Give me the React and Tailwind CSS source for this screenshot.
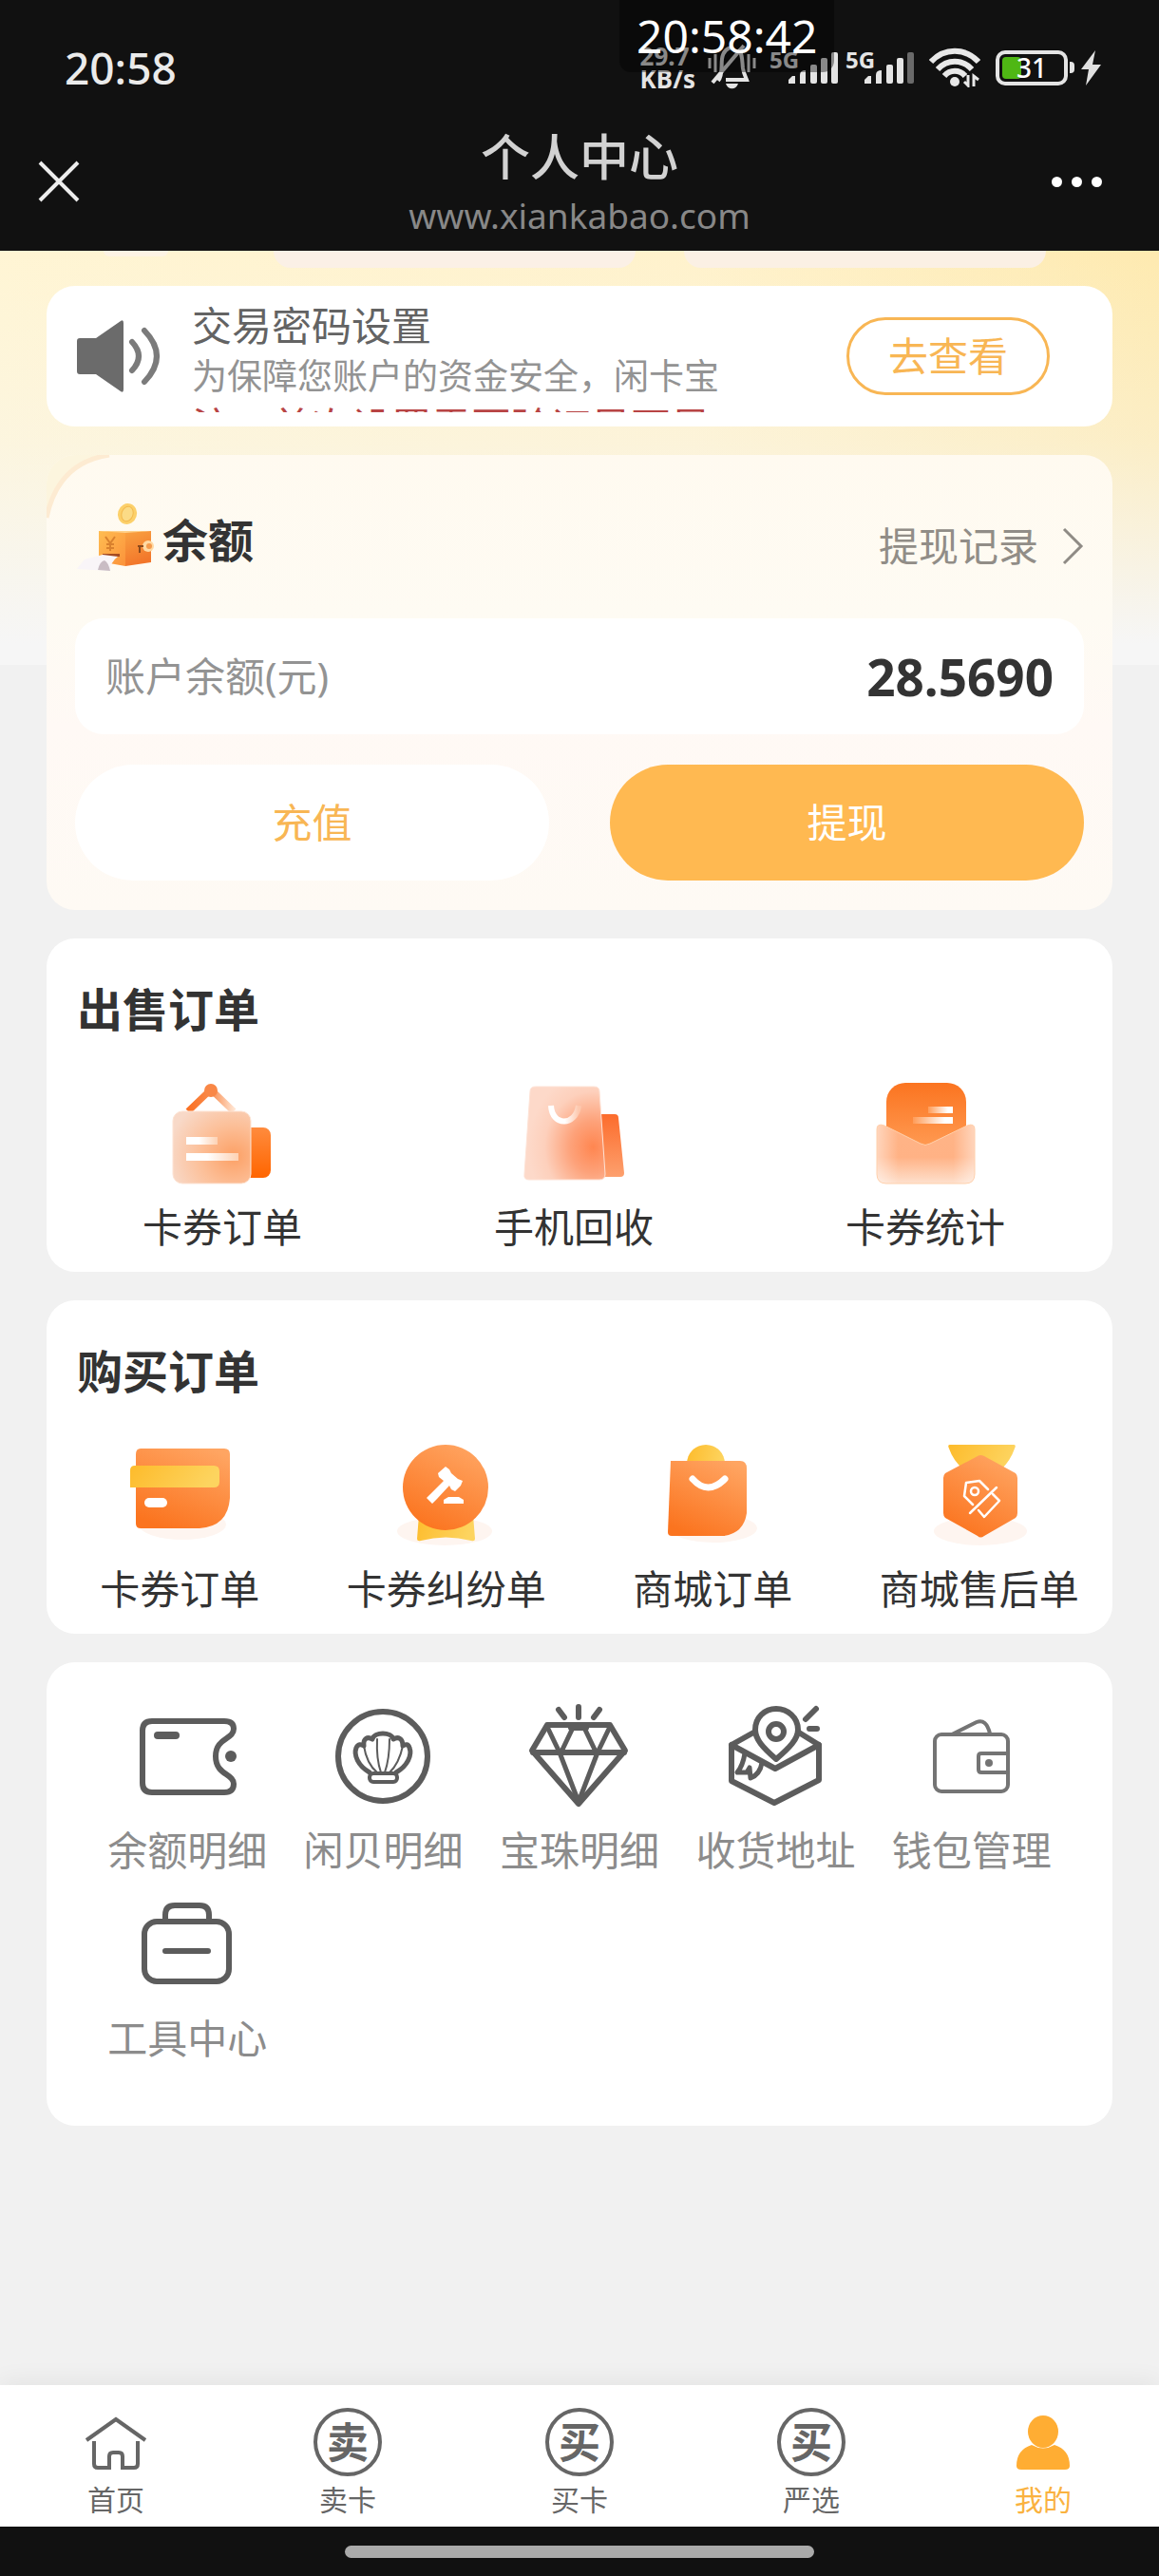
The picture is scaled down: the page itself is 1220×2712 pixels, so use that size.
import React from "react";

function CloseIcon() {
  return (
    <svg className="h-11 w-11" viewBox="0 0 44 44" fill="none" stroke="#ededed" strokeWidth="4">
      <path d="M2 2 42 42M42 2 2 42" />
    </svg>
  );
}

function BellOffIcon() {
  return (
    <svg className="h-[52px] w-[54px]" viewBox="0 0 54 52" fill="none" stroke="#e4e4e4">
      <path d="M12 40C17 34 15 25 16 17 17 9 22 5 27 5M33 7C38 11 37 20 38 27 39 33 41 36 42 39H20" strokeWidth="4" />
      <path d="M6 42 39 3" strokeWidth="4" />
      <path d="M20 43H33C31 50 22 50 20 43Z" fill="#e4e4e4" stroke="none" />
      <path d="M3 16V27M9 12V31M44 12V31M50 16V27" strokeWidth="3" />
    </svg>
  );
}

function SignalIcon({ weak }) {
  return (
    <span className="flex w-[76px] items-end">
      <span className="self-start text-[24px] leading-[24px] font-bold text-[#e4e4e4]">5G</span>
      <svg className="-ml-3 h-[40px] w-[54px] shrink-0" viewBox="0 0 54 40" fill="#e4e4e4">
        <path d="M1 37V33L5 29H8V37ZM13 37V28Q13 23 19 23V37Z" />
        <rect x="24" y="17" width="7" height="20" rx="2" />
        <rect x="35" y="10" width="7" height="27" rx="2" />
        <rect x="46" y="4" width="7" height="33" rx="2" fill={weak ? "#6a6a6a" : "#e4e4e4"} />
      </svg>
    </span>
  );
}

function WifiIcon() {
  return (
    <svg className="h-[42px] w-[54px]" viewBox="0 0 54 42" fill="none" stroke="#e8e8e8" strokeWidth="6">
      <path d="M2 15C16 0 38 0 52 15" />
      <path d="M9 23C19 12 35 12 45 23" />
      <path d="M16 30C22 23 32 23 38 30" />
      <circle cx="27" cy="36" r="5" fill="#e8e8e8" stroke="none" />
      <path d="M41 29V40L37 36M47 41V30L52 34" strokeWidth="3" />
    </svg>
  );
}

function BoltIcon() {
  return (
    <svg className="h-[37px] w-[23px]" viewBox="0 0 23 37" fill="#e0e0e0">
      <path d="M16 0 1 20H9L6 37 22 15H13Z" />
    </svg>
  );
}

function SpeakerIcon() {
  return (
    <svg className="h-[76px] w-[88px] shrink-0" viewBox="0 0 88 76">
      <path d="M3 19H20L46 1Q49-1 49 3V73Q49 77 46 75L20 57H3Q0 57 0 54V22Q0 19 3 19Z" fill="#6b6b6b" />
      <path d="M58 23Q72 38 58 53" fill="none" stroke="#7b7b7b" strokeWidth="6" strokeLinecap="round" />
      <path d="M71 11Q97 38 71 65" fill="none" stroke="#7b7b7b" strokeWidth="6" strokeLinecap="round" />
    </svg>
  );
}

function SafeIcon() {
  return (
    <svg className="h-[88px] w-[92px] shrink-0" viewBox="0 0 92 88">
      <defs>
        <linearGradient id="safeFront" x1="0" y1="0" x2="1" y2="1">
          <stop stopColor="#ffbd52" />
          <stop offset="1" stopColor="#fb923a" />
        </linearGradient>
        <linearGradient id="safeSide" x1="0" y1="0" x2="0.3" y2="1">
          <stop stopColor="#f9a242" />
          <stop offset="1" stopColor="#f2762a" />
        </linearGradient>
      </defs>
      <ellipse cx="55" cy="16" rx="10" ry="11" fill="#fcd06a" transform="rotate(18 55 16)" />
      <ellipse cx="55" cy="16" rx="6" ry="8" fill="#fbdb86" stroke="#f2b84c" transform="rotate(18 55 16)" />
      <path d="M25 34H80L53 37Z" fill="#ffd18a" />
      <path d="M25 34 53 36V71L25 66Z" fill="url(#safeFront)" />
      <path d="M53 36 80 34V67L53 71Z" fill="url(#safeSide)" />
      <path d="M32 40 37 47 42 40M37 47V55M33 48H41M33 52H41" fill="none" stroke="#d9812e" strokeWidth="2" />
      <circle cx="77" cy="50" r="6" fill="#ffd9a3" />
      <circle cx="78" cy="50" r="3" fill="#f59a4c" />
      <path d="M66 50H72M68 50V57" stroke="#8c4a1c" strokeWidth="2" fill="none" />
      <path d="M29 58H47V61H29Z" fill="#a64c22" />
      <path d="M10 64 29 59 45 61Q37 67 37 76L2 74Z" fill="#f9f5f8" />
      <path d="M24 75Q26 66 31 65 35 67 37 76Z" fill="#c9bcc4" />
    </svg>
  );
}

function ChevronIcon() {
  return (
    <svg className="h-10 w-6" viewBox="0 0 24 40" fill="none" stroke="#8f8b85" strokeWidth="3">
      <path d="M3 2 21 20 3 38" />
    </svg>
  );
}

const artClass = "h-[110px] w-[110px]";
const view = "0 0 110 110";

function HangingSignIcon() {
  return (
    <svg className={artClass} viewBox={view}>
      <defs>
        <linearGradient id="signBack" x1="0" y1="0" x2="0" y2="1">
          <stop stopColor="#ff8b3d" />
          <stop offset="1" stopColor="#ff6500" />
        </linearGradient>
        <radialGradient id="signFace" cx="0.78" cy="0.62" r="0.85">
          <stop stopColor="#fca065" />
          <stop offset="0.5" stopColor="#fcbf98" />
          <stop offset="1" stopColor="#f8d9c8" />
        </radialGradient>
        <linearGradient id="signRope" x1="0" y1="0" x2="1" y2="0">
          <stop stopColor="#fa7124" />
          <stop offset="0.5" stopColor="#f98b4c" />
          <stop offset="1" stopColor="#ffe3d0" />
        </linearGradient>
        <linearGradient id="signLine" x1="0" y1="0" x2="1" y2="0">
          <stop offset="0.4" stopColor="#fff" />
          <stop offset="1" stopColor="#fdd2b4" />
        </linearGradient>
      </defs>
      <path d="M19 32 43 9 67 32" fill="none" stroke="url(#signRope)" strokeWidth="7" />
      <circle cx="43" cy="10" r="7" fill="#f98746" />
      <rect x="74" y="49" width="32" height="53" rx="8" fill="url(#signBack)" />
      <rect x="3" y="32" width="82" height="76" rx="10" fill="url(#signFace)" stroke="#fde3d3" strokeWidth="1" />
      <rect x="17" y="59" width="33" height="8" fill="url(#signLine)" />
      <rect x="17" y="76" width="55" height="8" fill="url(#signLine)" />
    </svg>
  );
}

function PhoneBagIcon() {
  return (
    <svg className={artClass} viewBox={view}>
      <defs>
        <radialGradient id="bagFace" cx="0.85" cy="0.65" r="0.8">
          <stop stopColor="#ff8650" />
          <stop offset="0.35" stopColor="#fda27a" />
          <stop offset="0.75" stopColor="#fdd0bc" />
          <stop offset="1" stopColor="#fdd9c9" />
        </radialGradient>
        <linearGradient id="bagBack" x1="0" y1="0" x2="0" y2="1">
          <stop stopColor="#fc6c2c" />
          <stop offset="1" stopColor="#fda06e" />
        </linearGradient>
        <linearGradient id="bagSmile" x1="0" y1="0" x2="1" y2="0">
          <stop offset="0.5" stopColor="#fff" />
          <stop offset="1" stopColor="#fdc8ae" />
        </linearGradient>
      </defs>
      <path d="M82 35H98Q102 35 102 39L108 97Q108 101 104 101H82Z" fill="url(#bagBack)" />
      <path d="M15 6H76Q82 6 82 11L88 98Q88 104 82 104H8Q2 104 3 98L9 11Q9 6 15 6Z" fill="url(#bagFace)" stroke="#fee2d5" strokeWidth="1" />
      <path d="M31 26C32 48 57 48 60 26" fill="none" stroke="url(#bagSmile)" strokeWidth="6" />
    </svg>
  );
}

function EnvelopeIcon() {
  return (
    <svg className={artClass} viewBox={view}>
      <defs>
        <linearGradient id="envCard" x1="0" y1="0" x2="0" y2="1">
          <stop stopColor="#fb7420" />
          <stop offset="0.75" stopColor="#ff9a52" />
        </linearGradient>
        <linearGradient id="envBody" x1="0" y1="0" x2="0" y2="1">
          <stop stopColor="#ffb487" />
          <stop offset="0.55" stopColor="#ffb285" />
          <stop offset="1" stopColor="#fee0cd" />
        </linearGradient>
        <linearGradient id="envEdge" x1="0" y1="0" x2="1" y2="0">
          <stop stopColor="#fff" stopOpacity="0.45" />
          <stop offset="0.22" stopColor="#fff" stopOpacity="0" />
          <stop offset="0.78" stopColor="#fff" stopOpacity="0" />
          <stop offset="1" stopColor="#fff" stopOpacity="0.45" />
        </linearGradient>
        <linearGradient id="envLine" x1="0" y1="0" x2="1" y2="0">
          <stop stopColor="#ff9c58" />
          <stop offset="0.8" stopColor="#fff" />
        </linearGradient>
      </defs>
      <rect x="14" y="2" width="84" height="90" rx="20" fill="url(#envCard)" />
      <rect x="58" y="27" width="26" height="7" fill="url(#envLine)" />
      <rect x="42" y="38" width="42" height="7" fill="url(#envLine)" />
      <path d="M4 51Q4 44 12 47L50 66Q55 69 60 66L99 47Q107 44 107 51V98Q107 108 97 108H14Q4 108 4 98Z" fill="url(#envBody)" />
      <path d="M4 51Q4 44 12 47L50 66Q55 69 60 66L99 47Q107 44 107 51V98Q107 108 97 108H14Q4 108 4 98Z" fill="url(#envEdge)" stroke="#ffd0ac" strokeWidth="1" />
    </svg>
  );
}

function OrangeDefs({ id }) {
  return (
    <defs>
      <linearGradient id={id} x1="0.8" y1="0" x2="0.3" y2="1">
        <stop stopColor="#ffa562" />
        <stop offset="1" stopColor="#fb741f" />
      </linearGradient>
      <linearGradient id={id + "Gold"} x1="0" y1="0" x2="1" y2="0.2">
        <stop stopColor="#fdbb2b" />
        <stop offset="1" stopColor="#fdd45f" />
      </linearGradient>
    </defs>
  );
}

function CardIcon() {
  return (
    <svg className={artClass} viewBox={view}>
      <OrangeDefs id="card" />
      <ellipse cx="58" cy="86" rx="46" ry="16" fill="#fef5f0" />
      <path d="M14 6H102Q108 6 108 12V58Q106 88 76 90H14Q9 90 9 85V12Q9 6 14 6Z" fill="url(#card)" />
      <path d="M8 24H91Q97 24 97 30V41Q97 47 91 47H3V29Q3 24 8 24Z" fill="url(#cardGold)" />
      <rect x="18" y="58" width="24" height="10" rx="5" fill="#fff" />
    </svg>
  );
}

function GavelIcon() {
  return (
    <svg className={artClass} viewBox={view}>
      <OrangeDefs id="gavel" />
      <ellipse cx="53" cy="93" rx="50" ry="15" fill="#fef5f0" />
      <path d="M26 76H83L85 101Q85 104 81 103 54 96 28 103 24 104 24 101Z" fill="url(#gavelGold)" />
      <circle cx="54" cy="47" r="45" fill="url(#gavel)" />
      <path d="M54 25 58 28 60 32 67 38 72 40 70 45 64 51 60 49 58 45 45 59 40 64 34 58 38 54 52 40 47 36 46 32Z" fill="#fff" />
      <path d="M52 64V60L57 57H68L73 60V64Z" fill="#fff" />
    </svg>
  );
}

function SmileBagIcon() {
  return (
    <svg className={artClass} viewBox={view}>
      <OrangeDefs id="smile" />
      <ellipse cx="56" cy="90" rx="46" ry="15" fill="#fef5f0" />
      <circle cx="48" cy="22" r="20" fill="url(#smileGold)" />
      <path d="M11 19H84Q91 19 91 27V74Q88 95 67 98H12Q8 98 8 94Z" fill="url(#smile)" />
      <path d="M34 38Q50 56 68 38" fill="none" stroke="#fff" strokeWidth="7" strokeLinecap="round" />
    </svg>
  );
}

function MedalIcon() {
  return (
    <svg className={artClass} viewBox={view}>
      <OrangeDefs id="medal" />
      <ellipse cx="56" cy="93" rx="49" ry="15" fill="#fef5f0" />
      <path d="M24 2H91Q94 2 92 6Q88 18 78 28H38Q27 18 23 6 21 2 24 2Z" fill="url(#medalGold)" />
      <path d="M53 14Q56 12 60 14L93 32Q95 34 95 37V74Q95 77 93 79L60 98Q56 101 53 98L19 79Q17 77 17 74V37Q17 34 19 32Z" fill="url(#medal)" />
      <g fill="none" stroke="#fff" strokeWidth="2.5" strokeLinecap="round" strokeLinejoin="round">
        <path d="M64 49 55 40 41 42 39 56 48 65" />
        <circle cx="50" cy="51" r="4" />
        <path d="M73 47 45 74M69 54 76 61 60 78 54 71" />
      </g>
    </svg>
  );
}

function LineArt({ children, width = 6, color = "#5c5c5c" }) {
  return (
    <svg className={artClass} viewBox={view} fill="none" stroke={color} strokeWidth={width} strokeLinejoin="round" strokeLinecap="round">
      {children}
    </svg>
  );
}

function TicketIcon() {
  return (
    <LineArt>
      <path d="M18 18H94Q104 18 104 26C104 38 85 35 85 55S104 73 104 84Q104 93 94 93H18Q8 93 8 83V28Q8 18 18 18Z" />
      <path d="M24 33H43" strokeWidth="8" />
      <circle cx="101" cy="55" r="6" fill="#5c5c5c" stroke="none" />
    </LineArt>
  );
}

function ShellIcon() {
  return (
    <LineArt>
      <circle cx="54" cy="55" r="47" />
      <path d="M40 72C28 65 23 54 26 46 28 42 31 42 34 44 33 36 38 34 43 37 45 29 63 29 65 37 70 34 75 36 75 44 78 42 81 42 82 46 85 54 80 65 68 72" strokeWidth="5" />
      <path d="M34 44Q37 63 48 72M65 37M75 44Q71 63 61 72M48 37Q47 58 52 72M61 37Q61 58 56 72" strokeWidth="2" />
      <rect x="40" y="73" width="29" height="9" rx="4" strokeWidth="4" />
    </LineArt>
  );
}

function DiamondIcon() {
  return (
    <LineArt>
      <path d="M21 22H87L103 49 54 105 5 49Z" />
      <path d="M6 51H102" />
      <path d="M21 24 34 51 54 103 74 51 87 24M48 25 36 50M60 25 72 50" strokeWidth="5" />
      <path d="M46 25H62" strokeWidth="6" />
      <path d="M33 6 39 14M54 3V14M76 6 70 14" />
    </LineArt>
  );
}

function ParcelIcon() {
  return (
    <LineArt>
      <path d="M34 29 9 43V81L54 104 101 80V43L80 30" />
      <path d="M9 43 55 68 101 43" />
      <path d="M56 58C42 46 34 37 34 27 34 14 44 5 56 5S79 14 79 27C79 37 70 46 56 58Z" />
      <circle cx="56" cy="29" r="8" />
      <path d="M23 52Q21 65 15 72L25 72 28 67 29 78Q39 74 41 62" strokeWidth="5" />
      <path d="M98 5 87 16M91 26H99" />
    </LineArt>
  );
}

function WalletIcon() {
  return (
    <LineArt width={4} color="#747474">
      <rect x="16" y="32" width="77" height="60" rx="7" />
      <path d="M34 32 60 19Q70 15 74 31" />
      <path d="M93 52H65Q62 52 62 55V69Q62 72 65 72H93" />
      <circle cx="73" cy="62" r="4" fill="#747474" stroke="none" />
    </LineArt>
  );
}

function ToolboxIcon() {
  return (
    <LineArt>
      <rect x="10" y="31" width="89" height="63" rx="13" />
      <path d="M32 31V24Q32 14 42 14H68Q78 14 78 24V31M32 62H77" />
    </LineArt>
  );
}

function HomeIcon() {
  return (
    <svg className="h-[72px] w-[72px]" viewBox="0 0 72 72" fill="none" stroke="#666" strokeWidth="4">
      <path d="M5 34 36 12 67 34" />
      <path d="M13 35V59Q13 63 17 63H29V51Q29 47 33 47H39Q43 47 43 51V63H55Q59 63 59 59V35" />
    </svg>
  );
}

function PersonIcon() {
  return (
    <svg className="h-[72px] w-[72px]" viewBox="0 0 72 72" fill="#ffad33">
      <ellipse cx="36" cy="25" rx="16" ry="17" />
      <path d="M24 39Q36 46 48 39 64 44 64 61 64 65 59 65H13Q8 65 8 61 8 44 24 39Z" />
    </svg>
  );
}

function CircledGlyph({ children }) {
  return (
    <span aria-hidden="true" className="flex h-[72px] w-[72px] items-center justify-center rounded-full border-4 border-[#666] text-[44px] leading-none font-bold">
      {children}
    </span>
  );
}

function Entry({ icon, label, muted }) {
  return (
    <a href="#" className={`flex flex-col items-center gap-3.5 text-[42px] leading-[60px] whitespace-nowrap ${muted ? "text-[#8c8c8c]" : "text-[#333]"}`}>
      {icon}
      <span>{label}</span>
    </a>
  );
}

function OrderCard({ title, gridClass, items }) {
  return (
    <section className="rounded-[30px] bg-white pt-[43px] pb-[17px]">
      <h2 className="px-8 text-[48px] leading-[64px] font-bold text-[#333]">{title}</h2>
      <div className={`mt-[43px] grid ${gridClass}`}>
        {items.map(([label, icon]) => (
          <Entry key={label} label={label} icon={icon} />
        ))}
      </div>
    </section>
  );
}

const sellItems = [
  ["卡券订单", <HangingSignIcon />],
  ["手机回收", <PhoneBagIcon />],
  ["卡券统计", <EnvelopeIcon />],
];

const buyItems = [
  ["卡券订单", <CardIcon />],
  ["卡券纠纷单", <GavelIcon />],
  ["商城订单", <SmileBagIcon />],
  ["商城售后单", <MedalIcon />],
];

const toolItems = [
  ["余额明细", <TicketIcon />],
  ["闲贝明细", <ShellIcon />],
  ["宝珠明细", <DiamondIcon />],
  ["收货地址", <ParcelIcon />],
  ["钱包管理", <WalletIcon />],
  ["工具中心", <ToolboxIcon />],
];

const tabs = [
  ["首页", <HomeIcon />],
  ["卖卡", <CircledGlyph>卖</CircledGlyph>],
  ["买卡", <CircledGlyph>买</CircledGlyph>],
  ["严选", <CircledGlyph>买</CircledGlyph>],
  ["我的", <PersonIcon />, true],
];

function StatusBar() {
  return (
    <div className="relative flex h-[118px] items-center justify-between pt-6 pr-[60px] pl-[68px]">
      <span className="text-[46px] leading-none font-medium text-[#ebebeb]">20:58</span>
      <div className="flex items-center gap-3">
        <span className="text-[26px] leading-[24px] font-bold text-[#e4e4e4]">
          29.7
          <br />
          KB/s
        </span>
        <BellOffIcon />
        <span className="flex gap-1">
          <SignalIcon />
          <SignalIcon weak />
        </span>
        <WifiIcon />
        <span className="ml-1 flex items-center gap-0.5">
          <span className="relative flex h-[37px] w-[76px] items-center justify-center rounded-[10px] border-4 border-[#e4e4e4] text-[28px] leading-none font-medium text-white">
            <span className="absolute top-[3px] left-[3px] h-[23px] w-5 rounded-[4px] bg-[#4fb714]" />
            <span className="relative">31</span>
          </span>
          <span className="mr-1 h-3 w-[5px] rounded-r bg-[#e4e4e4]" />
          <BoltIcon />
        </span>
      </div>
      <span className="absolute top-0 left-[652px] rounded-b-xl bg-black/40 px-[18px] text-[48px] leading-[76px] text-white">
        20:58:42
      </span>
    </div>
  );
}

export default function App() {
  return (
    <div className="flex min-h-screen flex-col bg-[#f1f1f1] font-['Noto_Sans','Noto_Sans_CJK_SC',sans-serif]">
      <header className="bg-[#111]">
        <StatusBar />
        <div className="grid h-[146px] grid-cols-[80px_1fr_60px] items-center pr-[60px] pl-10">
          <button type="button" aria-label="关闭">
            <CloseIcon />
          </button>
          <div className="pt-2 text-center">
            <h1 className="text-[52px] leading-[64px] font-medium text-[#d2d2d2]">个人中心</h1>
            <p className="text-[37px] leading-[60px] text-[#888]">www.xiankabao.com</p>
          </div>
          <button type="button" aria-label="更多" className="flex items-center justify-end gap-2.5">
            <span className="h-[11px] w-[11px] rounded-full bg-white" />
            <span className="h-[11px] w-[11px] rounded-full bg-white" />
            <span className="h-[11px] w-[11px] rounded-full bg-white" />
          </button>
        </div>
      </header>

      <main className="flex-1 bg-[linear-gradient(180deg,rgba(246,246,246,0)_0%,rgba(246,246,246,0.3)_45%,#f6f6f6_95%),linear-gradient(90deg,#fff5d4_0%,#fff2cc_60%,#feeab0_100%)] bg-[length:100%_436px] bg-no-repeat px-[49px]">
        <div className="flex h-[37px] items-start overflow-hidden">
          <span className="ml-[60px] h-1.5 w-[68px] shrink-0 rounded-b-full bg-[#fdf3e4]" />
          <span className="ml-[111px] h-[18px] w-[381px] shrink-0 rounded-b-[30px] bg-[#fbf0e6]" />
          <span className="ml-[51px] h-[18px] w-[381px] shrink-0 rounded-b-[30px] bg-[#fbf0e4]" />
        </div>

        <div className="flex flex-col gap-[30px]">
          <section className="flex h-[148px] items-center rounded-[30px] bg-white pr-[66px] pl-8">
            <SpeakerIcon />
            <div className="ml-[33px] h-[118px] flex-1 overflow-hidden whitespace-nowrap">
              <h2 className="text-[42px] leading-[54px] text-[#636363]">交易密码设置</h2>
              <p className="text-[37px] leading-[52px] text-[#939393]">为保障您账户的资金安全，闲卡宝</p>
              <p className="text-[42px] leading-[54px] text-[#b84444]">注：首次设置需要验证是否是</p>
            </div>
            <button type="button" className="h-[82px] w-[214px] rounded-full border-[3px] border-[#f8b654] text-[42px] leading-none text-[#f8b654]">
              去查看
            </button>
          </section>

          <section className="relative overflow-hidden rounded-[30px] bg-[linear-gradient(180deg,#fffaf0_0%,#fefbf3_35%,#fff9f5_60%,#fefaf4_100%)] px-[30px] pb-[31px]">
            <svg className="absolute top-0 left-0 h-[70px] w-[70px]" viewBox="0 0 70 70">
              <path d="M0 0H66Q12 8 0 66Z" fill="#fcf5de" />
              <path d="M66 0Q12 8 0 66" fill="none" stroke="#fdebd2" strokeWidth="5" />
            </svg>
            <div className="relative flex h-[172px] items-center justify-between pt-2">
              <h2 className="flex items-center text-[48px] leading-none font-bold text-[#333]">
                <SafeIcon />
                余额
              </h2>
              <a href="#" className="flex items-center gap-6 pt-3 text-[42px] leading-none text-[#918d87]">
                提现记录
                <ChevronIcon />
              </a>
            </div>
            <div className="flex h-[122px] items-center justify-between rounded-[30px] bg-white px-8">
              <span className="text-[42px] leading-none text-[#939393]">账户余额(元)</span>
              <span className="text-[53px] leading-none font-bold text-[#333]">28.5690</span>
            </div>
            <div className="mt-8 grid grid-cols-2 gap-16">
              <button type="button" className="h-[122px] rounded-full bg-white text-[42px] leading-none text-[#f8b654]">
                充值
              </button>
              <button type="button" className="h-[122px] rounded-full bg-[#ffb951] text-[42px] leading-none text-white">
                提现
              </button>
            </div>
          </section>

          <OrderCard title="出售订单" gridClass="grid-cols-3 pr-3" items={sellItems} />
          <OrderCard title="购买订单" gridClass="grid-cols-4" items={buyItems} />

          <section className="grid grid-cols-5 gap-y-3.5 rounded-[30px] bg-white px-[45px] pt-11 pb-[62px]">
            {toolItems.map(([label, icon]) => (
              <Entry key={label} label={label} icon={icon} muted />
            ))}
          </section>
        </div>
      </main>

      <nav className="grid grid-cols-5 bg-white pt-6 pb-2.5 shadow-[0_-4px_24px_rgba(0,0,0,0.06)]">
        {tabs.map(([label, icon, active]) => (
          <a
            key={label}
            href="#"
            className={`flex flex-col items-center gap-[7px] text-[30px] leading-9 ${active ? "text-[#fab240]" : "text-[#666]"}`}
          >
            {icon}
            <span>{label}</span>
          </a>
        ))}
      </nav>
      <div className="flex h-[52px] items-center justify-center bg-[#111]">
        <span className="h-[13px] w-[494px] rounded-full bg-[#aaa]" />
      </div>
    </div>
  );
}
